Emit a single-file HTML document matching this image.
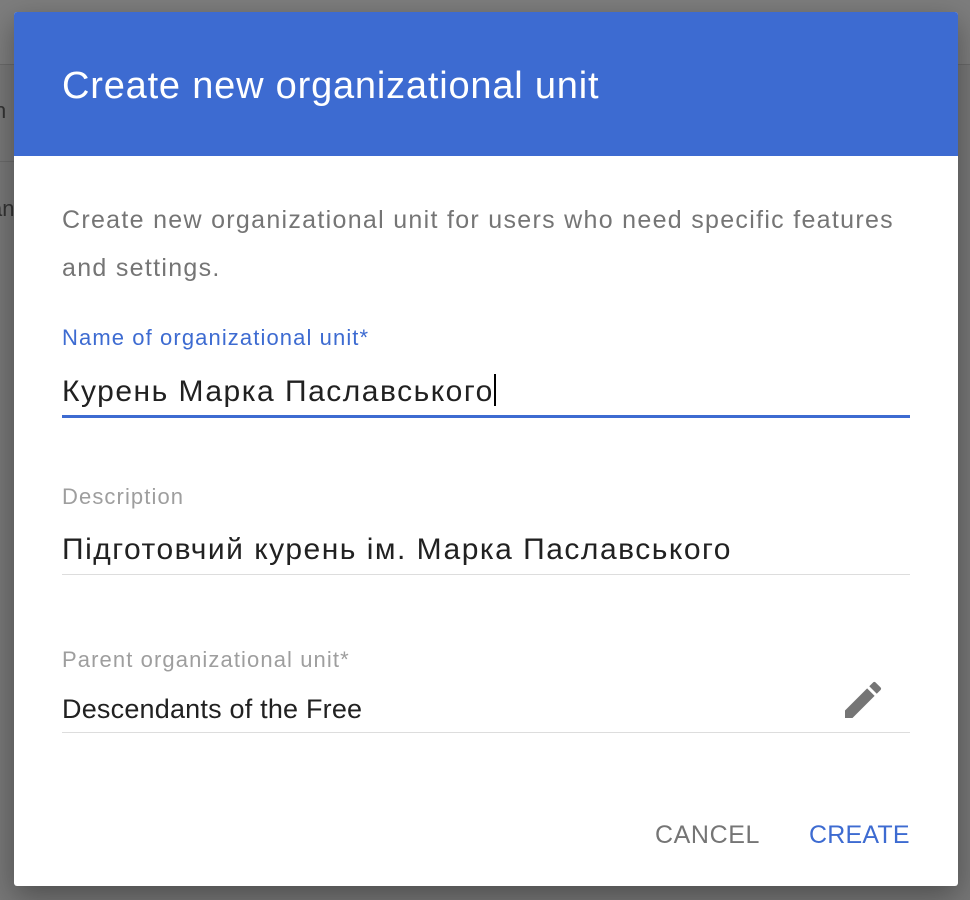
<!DOCTYPE html>
<html><head><meta charset="utf-8"><style>
body{margin:0;width:970px;height:900px;background:#777;position:relative;overflow:hidden;font-family:"Liberation Sans",Roboto,sans-serif}
.top{position:absolute;left:0;top:0;width:970px;height:64px;background:#7d7d7d;border-bottom:1px solid #6a6a6a}
.l2{position:absolute;left:0;top:161px;width:14px;height:1px;background:#6a6a6a}
.dlg{position:absolute;left:14px;top:12px;width:944px;height:874px;background:#fff;border-radius:3px;box-shadow:0 10px 30px rgba(0,0,0,.35);overflow:hidden}
.hd{height:144px;background:#3d6bd1;color:#fff;font-size:38px;padding-left:48px;line-height:144px;box-sizing:border-box;letter-spacing:0.8px}
.hd span{position:relative;top:2px}
.t{position:absolute;left:48px;font-size:22px;white-space:nowrap}
.lb{letter-spacing:1.1px}
.line{position:absolute;left:48px;width:848px;height:1px;background:#ddd}
</style></head><body>
<div class="top"></div><div class="l2"></div>
<div style="position:absolute;left:-6px;top:98px;font-size:22px;color:#333">n</div>
<div style="position:absolute;left:-10px;top:196px;font-size:22px;color:#333">an</div>
<div class="dlg">
<div class="hd"><span>Create new organizational unit</span></div>
<div class="t" style="top:184px;color:#757575;font-size:25px;line-height:48px;letter-spacing:1.3px">Create new organizational unit for users who need specific features<br>and settings.</div>
<div class="t lb" style="top:313px;color:#3d6bd1;font-size:22px">Name of organizational unit*</div>
<div class="t" style="top:362px;color:#212121;font-size:30px;letter-spacing:1.5px">Курень Марка Паславського<span style="display:inline-block;width:2px;height:32px;background:#000;vertical-align:-5px"></span></div>
<div class="line" style="top:403px;height:3px;background:#3d6bd1"></div>
<div class="t lb" style="top:472px;color:#9e9e9e;font-size:22px">Description</div>
<div class="t" style="top:521px;color:#212121;font-size:30px;letter-spacing:1.5px">Підготовчий курень ім. Марка Паславського</div>
<div class="line" style="top:562px"></div>
<div class="t lb" style="top:635px;color:#9e9e9e;font-size:22px">Parent organizational unit*</div>
<div class="t" style="top:682px;color:#212121;font-size:27px;letter-spacing:0.2px">Descendants of the Free</div>
<svg style="position:absolute;left:825px;top:664px" width="48" height="48" viewBox="0 0 24 24"><path fill="#757575" d="M3 17.25V21h3.75L17.81 9.94l-3.75-3.75L3 17.25zM20.71 7.04a1 1 0 000-1.41l-2.34-2.34a1 1 0 00-1.41 0l-1.83 1.83 3.75 3.75 1.83-1.83z"/></svg>
<div class="line" style="top:720px"></div>
<div style="position:absolute;left:641px;top:809px;font-size:25px;color:#757575;letter-spacing:0.6px">CANCEL</div>
<div style="position:absolute;left:795px;top:809px;font-size:25px;color:#3d6bd1;letter-spacing:0.2px">CREATE</div>
</div>
</body></html>
